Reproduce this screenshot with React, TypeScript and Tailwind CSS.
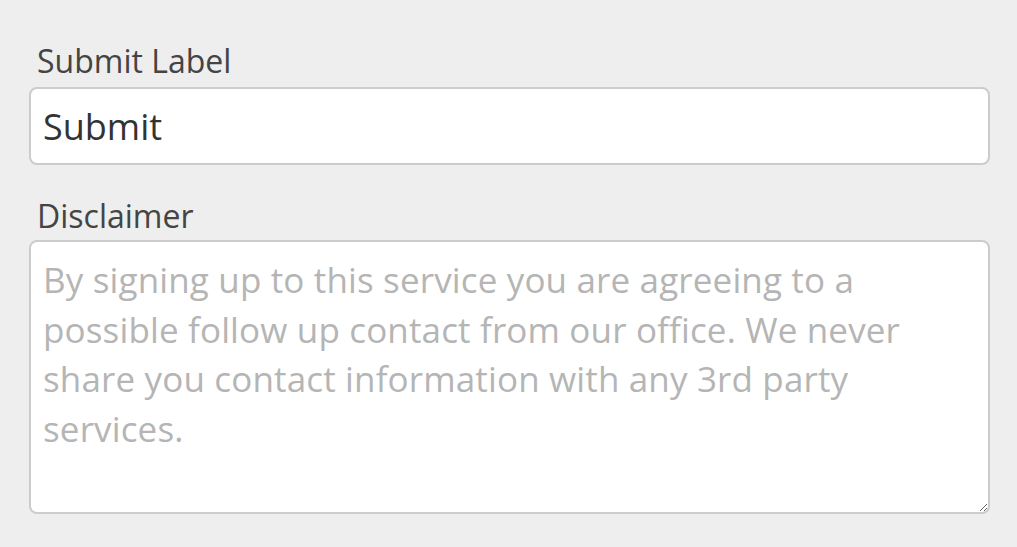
export default function App() {
  return (
    <div
      className="min-h-[547px] w-full bg-[#eeeeee] pl-[29px] pr-[27px] pt-[43px]"
      style={{ fontFamily: '"Open Sans", "Liberation Sans", sans-serif' }}
    >
      {/* Submit label field */}
      <label className="block pl-[8px] text-[32px] leading-[36px] text-[#444444]">Submit Label</label>
      <input
        type="text"
        defaultValue="Submit"
        className="mt-[8px] block h-[78px] w-full rounded-[8px] border-2 border-[#cccccc] bg-white px-[12px] text-[36px] text-[#333333] outline-none"
      />

      {/* Disclaimer field */}
      <label className="mt-[33px] block pl-[8px] text-[32px] leading-[36px] text-[#444444]">Disclaimer</label>
      <textarea
        placeholder="By signing up to this service you are agreeing to a possible follow up contact from our office. We never share you contact information with any 3rd party services."
        className="mt-[6px] block h-[274px] w-full rounded-[8px] border-2 border-[#cccccc] bg-white px-[12px] pt-[13px] text-[35px] leading-[49.5px] tracking-[0.15px] text-[#333333] outline-none placeholder:text-[#b5b5b5]"
      />
    </div>
  );
}
